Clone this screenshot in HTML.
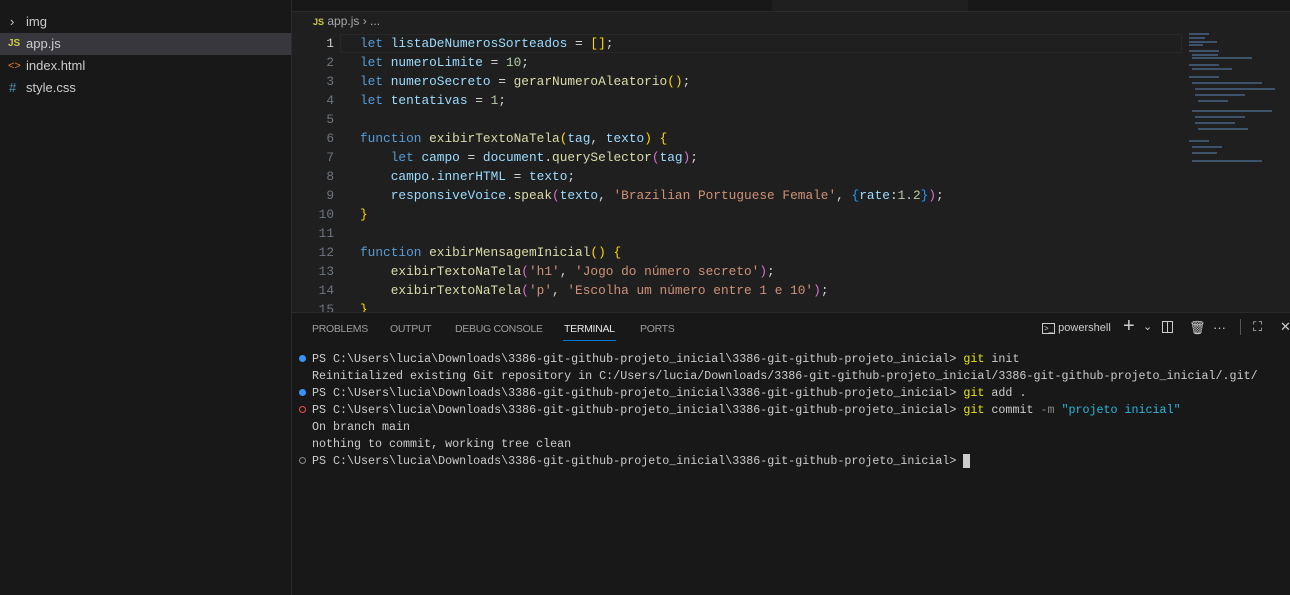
<!DOCTYPE html><html><head><style>
body{margin:0;width:1290px;height:595px;background:#1f1f1f;overflow:hidden;position:relative;font-family:"Liberation Sans",sans-serif}
.side{position:absolute;left:0;top:0;width:291px;height:595px;background:#181818;border-right:1px solid #2b2b2b}
.side div{position:absolute;left:0;width:291px;height:22px;line-height:22px;font-size:13px;color:#cccccc}
.top{position:absolute;left:292px;top:0;right:0;height:11px;background:#181818;border-bottom:1px solid #2b2b2b}
.tab{position:absolute;left:480px;top:0;width:196px;height:11px;background:#1f1f1f}
.code{position:absolute;left:292px;top:34px;font-family:"Liberation Mono",monospace;font-size:12.8px;line-height:19px;color:#d4d4d4;white-space:pre}
.ln{position:absolute;left:292px;width:42px;text-align:right;color:#6e7681}
.k{color:#569cd6}.v{color:#9cdcfe}.f{color:#dcdcaa}.s{color:#ce9178}.n{color:#b5cea8}.y{color:#ffd700}.p{color:#da70d6}.b{color:#179fff}
.panel{position:absolute;left:292px;top:312px;right:0;bottom:0;background:#181818;border-top:1px solid #2b2b2b}
.pt{position:absolute;top:10px;font-size:10.5px;color:#9d9d9d;letter-spacing:-0.3px}
.ic{position:absolute;top:6px;font-size:13px;color:#ccc}
.term{position:absolute;left:20px;top:38px;font-family:"Liberation Mono",monospace;font-size:11.68px;line-height:17px;color:#cccccc;white-space:pre}
.dot{position:absolute;left:7px;width:7px;height:7px;border-radius:50%}
.mm{position:absolute;height:2px;background:#4a6a8a;opacity:.7}
</style></head><body>
<div class="side">
<div style="top:11px"><span style="position:absolute;left:10px;color:#ccc">›</span><span style="position:absolute;left:26px">img</span></div>
<div style="top:33px;background:#37373d"><span style="position:absolute;left:8px;color:#cbcb41;font-size:10px;font-weight:bold">JS</span><span style="position:absolute;left:26px">app.js</span></div>
<div style="top:55px"><span style="position:absolute;left:8px;color:#e37933;font-size:11px">&lt;&gt;</span><span style="position:absolute;left:26px">index.html</span></div>
<div style="top:77px"><span style="position:absolute;left:9px;color:#519aba">#</span><span style="position:absolute;left:26px">style.css</span></div>
</div>
<div class="top"><div class="tab"></div></div>
<div style="position:absolute;left:313px;top:14px;font-size:12px;color:#a9a9a9"><span style="color:#cbcb41;font-size:9px;font-weight:bold">JS</span> app.js › ...</div>
<div style="position:absolute;left:340px;top:34px;width:840px;height:17px;border:1px solid #282828"></div>
<div class="code ln" style="text-align:right"><span style="color:#ccc">1</span>
2
3
4
5
6
7
8
9
10
11
12
13
14
15</div>
<div class="code" style="left:360px"><span class="k">let</span> <span class="v">listaDeNumerosSorteados</span> = <span class="y">[]</span>;
<span class="k">let</span> <span class="v">numeroLimite</span> = <span class="n">10</span>;
<span class="k">let</span> <span class="v">numeroSecreto</span> = <span class="f">gerarNumeroAleatorio</span><span class="y">()</span>;
<span class="k">let</span> <span class="v">tentativas</span> = <span class="n">1</span>;

<span class="k">function</span> <span class="f">exibirTextoNaTela</span><span class="y">(</span><span class="v">tag</span>, <span class="v">texto</span><span class="y">)</span> <span class="y">{</span>
    <span class="k">let</span> <span class="v">campo</span> = <span class="v">document</span>.<span class="f">querySelector</span><span class="p">(</span><span class="v">tag</span><span class="p">)</span>;
    <span class="v">campo</span>.<span class="v">innerHTML</span> = <span class="v">texto</span>;
    <span class="v">responsiveVoice</span>.<span class="f">speak</span><span class="p">(</span><span class="v">texto</span>, <span class="s">'Brazilian Portuguese Female'</span>, <span class="b">{</span><span class="v">rate</span>:<span class="n">1.2</span><span class="b">}</span><span class="p">)</span>;
<span class="y">}</span>

<span class="k">function</span> <span class="f">exibirMensagemInicial</span><span class="y">()</span> <span class="y">{</span>
    <span class="f">exibirTextoNaTela</span><span class="p">(</span><span class="s">'h1'</span>, <span class="s">'Jogo do número secreto'</span><span class="p">)</span>;
    <span class="f">exibirTextoNaTela</span><span class="p">(</span><span class="s">'p'</span>, <span class="s">'Escolha um número entre 1 e 10'</span><span class="p">)</span>;
<span class="y">}</span></div>
<div class="mm" style="left:1189px;top:33px;width:20px"></div><div class="mm" style="left:1189px;top:37px;width:16px"></div><div class="mm" style="left:1189px;top:41px;width:28px"></div><div class="mm" style="left:1189px;top:44px;width:14px"></div>
<div class="mm" style="left:1189px;top:50px;width:30px"></div><div class="mm" style="left:1192px;top:54px;width:26px"></div><div class="mm" style="left:1192px;top:57px;width:60px"></div>
<div class="mm" style="left:1189px;top:64px;width:30px"></div><div class="mm" style="left:1192px;top:68px;width:40px"></div><div class="mm" style="left:1189px;top:76px;width:30px"></div>
<div class="mm" style="left:1192px;top:82px;width:70px"></div><div class="mm" style="left:1195px;top:88px;width:80px"></div><div class="mm" style="left:1195px;top:94px;width:50px"></div><div class="mm" style="left:1198px;top:100px;width:30px"></div>
<div class="mm" style="left:1192px;top:110px;width:80px"></div><div class="mm" style="left:1195px;top:116px;width:50px"></div><div class="mm" style="left:1195px;top:122px;width:40px"></div><div class="mm" style="left:1198px;top:128px;width:50px"></div>
<div class="mm" style="left:1189px;top:140px;width:20px"></div><div class="mm" style="left:1192px;top:146px;width:30px"></div><div class="mm" style="left:1192px;top:152px;width:25px"></div><div class="mm" style="left:1192px;top:160px;width:70px"></div>
<div class="panel">
<span class="pt" style="left:20px">PROBLEMS</span><span class="pt" style="left:98px">OUTPUT</span><span class="pt" style="left:163px">DEBUG CONSOLE</span><span class="pt" style="left:272px;color:#e7e7e7">TERMINAL</span><span class="pt" style="left:348px">PORTS</span>
<div style="position:absolute;left:271px;top:27px;width:53px;height:1px;background:#0078d4"></div>
<span class="ic" style="left:750px;top:9px;font-size:11px"><span style="border:1px solid #ccc;font-size:8px;padding:0 1px">&gt;_</span> powershell</span>
<span class="ic" style="left:831px;top:2px;font-size:20px">+</span>
<span class="ic" style="left:851px;top:7px;font-size:11px">⌄</span>
<span class="ic" style="left:870px;top:8px;width:11px;height:12px;border:1px solid #ccc;box-sizing:border-box"><span style="position:absolute;left:4px;top:0;width:1px;height:10px;background:#ccc"></span></span>
<span class="ic" style="left:897px;top:7px">🗑</span>
<span class="ic" style="left:921px;top:7px">···</span>
<span class="ic" style="left:948px;top:6px;width:1px;height:16px;background:#555"></span>
<span class="ic" style="left:961px;top:6px">⛶</span>
<span class="ic" style="left:988px;top:6px">✕</span>
<div class="dot" style="top:42px;background:#3794ff"></div>
<div class="dot" style="top:76px;background:#3794ff"></div>
<div class="dot" style="top:93px;border:1px solid #f14c4c;width:5px;height:5px"></div>
<div class="dot" style="top:144px;border:1px solid #888;width:5px;height:5px"></div>
<div class="term">PS C:\Users\lucia\Downloads\3386-git-github-projeto_inicial\3386-git-github-projeto_inicial&gt; <span style="color:#e5e510">git</span> init
Reinitialized existing Git repository in C:/Users/lucia/Downloads/3386-git-github-projeto_inicial/3386-git-github-projeto_inicial/.git/
PS C:\Users\lucia\Downloads\3386-git-github-projeto_inicial\3386-git-github-projeto_inicial&gt; <span style="color:#e5e510">git</span> add .
PS C:\Users\lucia\Downloads\3386-git-github-projeto_inicial\3386-git-github-projeto_inicial&gt; <span style="color:#e5e510">git</span> commit <span style="color:#888">-m</span> <span style="color:#29b8db">"projeto inicial"</span>
On branch main
nothing to commit, working tree clean
PS C:\Users\lucia\Downloads\3386-git-github-projeto_inicial\3386-git-github-projeto_inicial&gt; <span style="background:#ccc"> </span></div>
</div>
</body></html>
